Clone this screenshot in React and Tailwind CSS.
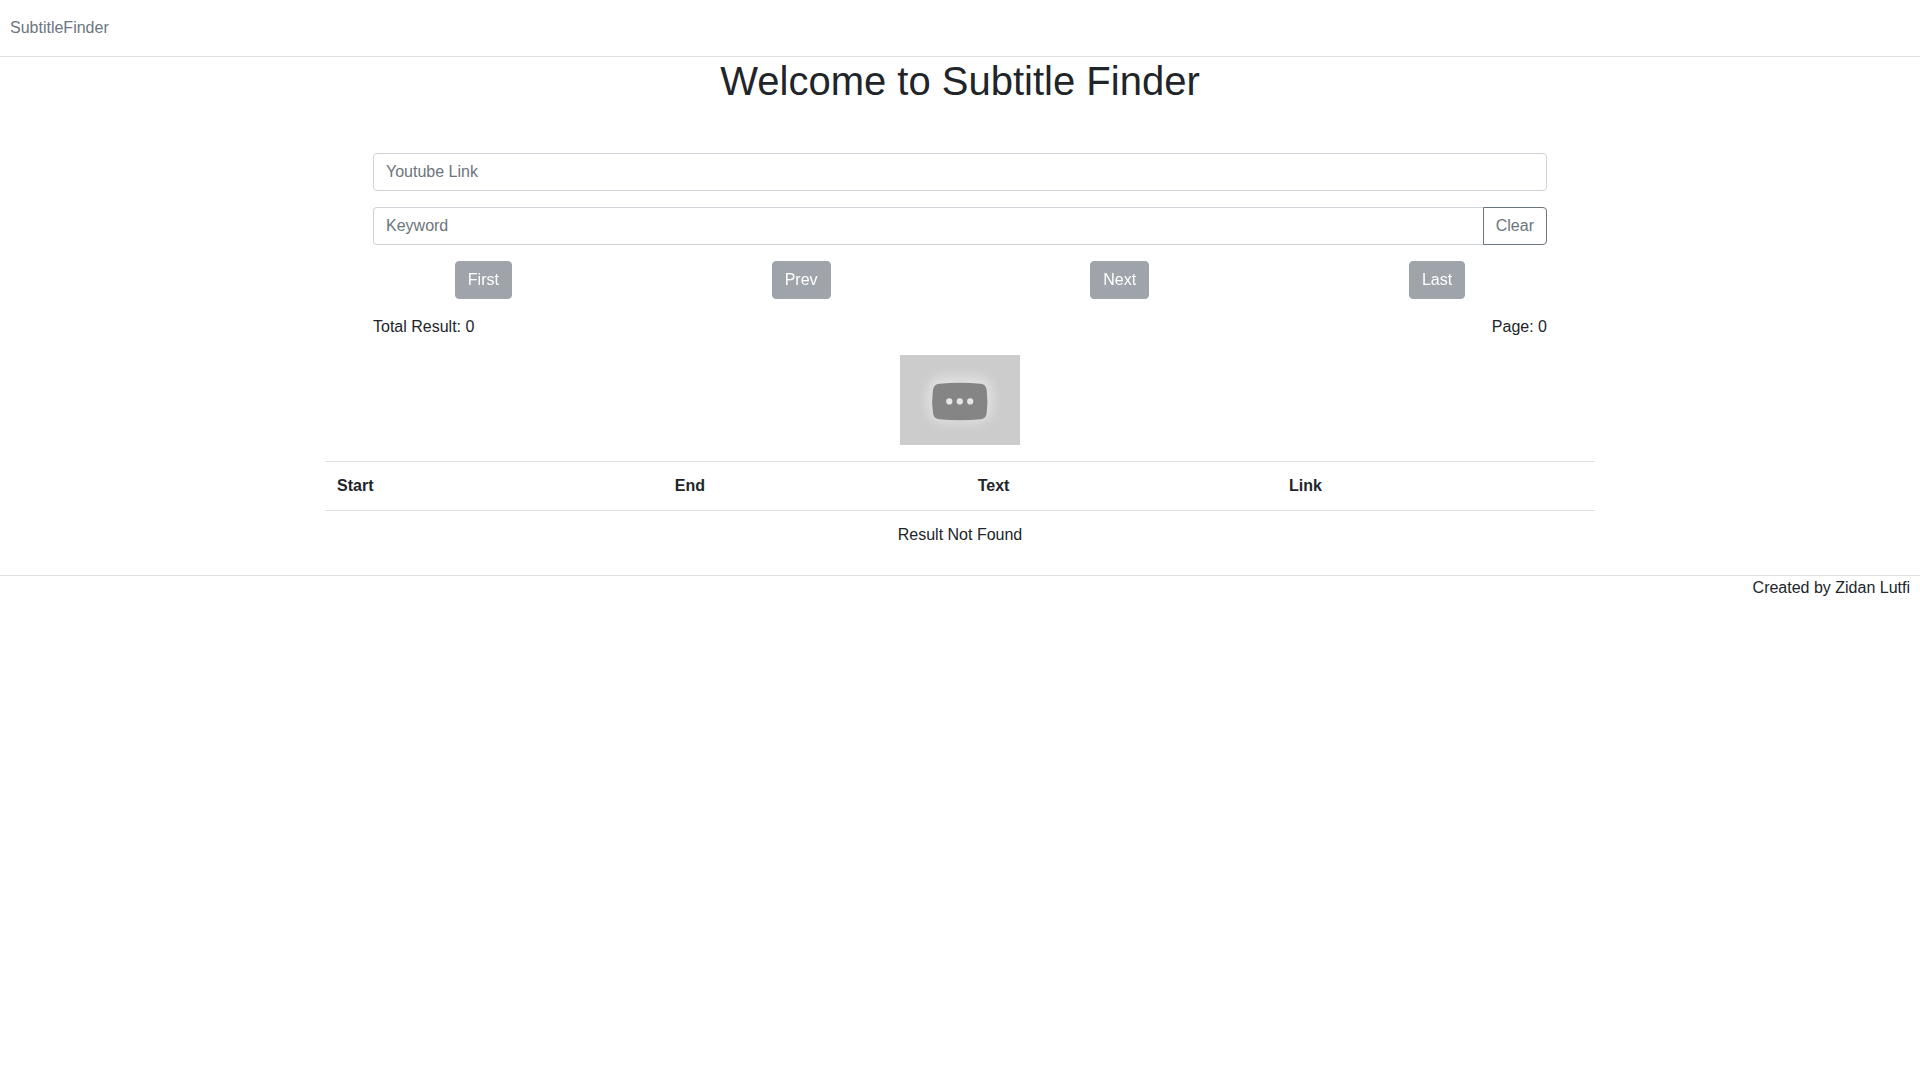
const pagerLabels = ["First", "Prev", "Next", "Last"];
const columns = ["Start", "End", "Text", "Link"];

function Thumbnail() {
  return (
    <svg viewBox="0 0 120 90" className="h-[90px] w-[120px]" role="img" aria-label="Video thumbnail">
      <defs>
        <filter id="glow" x="-40%" y="-60%" width="180%" height="220%">
          <feGaussianBlur stdDeviation="6" />
        </filter>
      </defs>
      <rect width="120" height="90" fill="#cccccc" />
      <rect x="28" y="22" width="64" height="45" rx="14" fill="#e2e2e2" filter="url(#glow)" />
      <path
        d="M39.5 28.8 Q60 26.8 80.5 28.8 Q86 29.4 86.7 35 Q88.1 46.5 86.7 58 Q86 63.8 80.5 64.3 Q60 66.2 39.5 64.3 Q33.8 63.8 33 58 Q31.2 46.5 33 35 Q33.8 29.4 39.5 28.8 Z"
        fill="#858585"
      />
      <circle cx="49.3" cy="46.4" r="3.1" fill="#e6e6e6" />
      <circle cx="59.8" cy="46.4" r="3.1" fill="#e6e6e6" />
      <circle cx="70.2" cy="46.4" r="3.1" fill="#e6e6e6" />
    </svg>
  );
}

export default function App() {
  return (
    <div className="bg-white font-['Liberation_Sans',Arial,sans-serif] text-base text-[#212529]">
      <nav className="border-b border-[#dee2e6] px-[10px] py-4">
        <a href="#" className="block w-fit text-[#6c757d]">SubtitleFinder</a>
      </nav>

      <main>
        <h1 className="mb-12 text-center text-[40px] leading-[48px] font-medium">Welcome to Subtitle Finder</h1>

        <div className="mx-auto w-2/3 px-[5px]">
          <div className="flex flex-col gap-4 px-12">
            <input
              type="text"
              aria-label="Youtube Link"
              placeholder="Youtube Link"
              className="h-[38px] w-full rounded border border-[#ced4da] px-3 placeholder:text-[#6c757d]"
            />
            <div className="flex">
              <input
                type="text"
                aria-label="Keyword"
                placeholder="Keyword"
                className="h-[38px] min-w-0 flex-1 rounded-l border border-r-0 border-[#ced4da] px-3 placeholder:text-[#6c757d]"
              />
              <button type="button" className="rounded-r border border-[#6c757d] px-3 text-[#6c757d]">
                Clear
              </button>
            </div>
          </div>

          <div className="my-4 flex justify-around">
            {pagerLabels.map((label) => (
              <button
                key={label}
                type="button"
                disabled
                className="h-[38px] rounded border border-[#6c757d] bg-[#6c757d] px-3 text-white opacity-65"
              >
                {label}
              </button>
            ))}
          </div>

          <div className="flex justify-between px-12">
            <p>Total Result: 0</p>
            <p>Page: 0</p>
          </div>

          <div className="my-4 flex justify-center">
            <Thumbnail />
          </div>

          <table className="mb-4 w-full border-collapse">
            <thead>
              <tr>
                {columns.map((name) => (
                  <th key={name} scope="col" className="border-y border-[#dee2e6] p-3 text-left font-bold">
                    {name}
                  </th>
                ))}
              </tr>
            </thead>
            <tbody>
              <tr>
                <td colSpan={4} className="p-3 text-center">Result Not Found</td>
              </tr>
            </tbody>
          </table>
        </div>
      </main>

      <footer className="border-t border-[#dee2e6] px-[10px] text-right">Created by Zidan Lutfi</footer>
    </div>
  );
}
